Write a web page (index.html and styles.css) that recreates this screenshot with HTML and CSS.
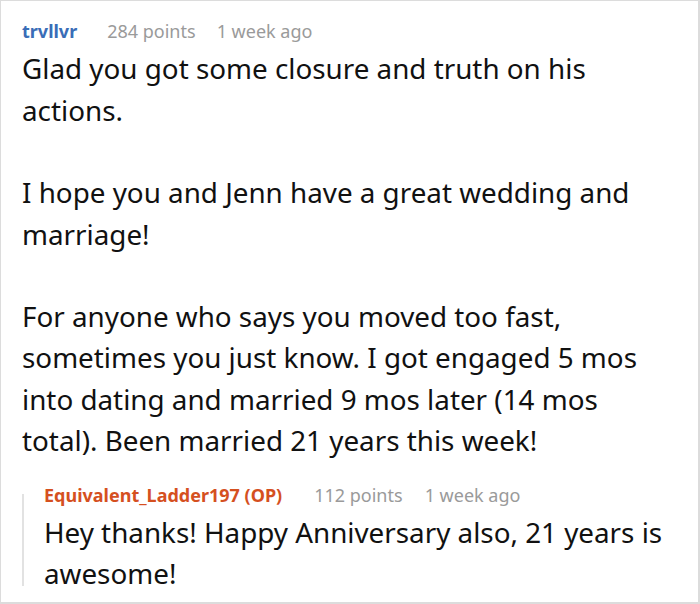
FILE: index.html
```html
<!DOCTYPE html>
<html>
<head>
<meta charset="utf-8">
<link rel="stylesheet" href="styles.css">
</head>
<body>
<div class="frame">
  <div class="comment">
    <div class="meta">
      <span class="user">trvllvr</span>
      <span class="info">284 points</span>
      <span class="info">1 week ago</span>
    </div>
    <div class="body">
      <p>Glad you got some closure and truth on his actions.</p>
      <p>I hope you and Jenn have a great wedding and marriage!</p>
      <p>For anyone who says you moved too fast, sometimes you just know. I got engaged 5 mos into dating and married 9 mos later (14 mos total). Been married 21 years this week!</p>
    </div>
    <div class="reply">
      <div class="meta reply-meta">
        <span class="user op">Equivalent_Ladder197 (OP)</span>
        <span class="info">112 points</span>
        <span class="info">1 week ago</span>
      </div>
      <div class="body reply-body">
        <p>Hey thanks! Happy Anniversary also, 21 years is awesome!</p>
      </div>
    </div>
  </div>
</div>
</body>
</html>
```
FILE: styles.css
```css
html, body {
  margin: 0;
  padding: 0;
  background: #fff;
}
.frame {
  width: 700px;
  height: 604px;
  box-sizing: border-box;
  border: 1px solid #dcdcdc;
  border-right-width: 2px;
  border-bottom-width: 2px;
  overflow: hidden;
  font-family: "Noto Sans", "Open Sans", sans-serif;
}
.comment {
  padding: 18px 30px 0 21px;
}
.meta {
  display: flex;
  white-space: nowrap;
  font-size: 18px;
  line-height: 24px;
  color: #9a9a9a;
}
.user {
  font-weight: 700;
  color: #3a6db7;
  margin-right: 30px;
}
.info {
  margin-right: 21px;
}
.body {
  margin-top: 5.35px;
  font-size: 27.8px;
  line-height: 41.3px;
  color: #111;
}
.body p {
  margin: 0 0 41.3px 0;
}
.body p:last-child {
  margin-bottom: 0;
}
.reply {
  position: relative;
  margin-top: 21.4px;
  margin-right: -6px;
  padding-left: 22px;
}
.reply::before {
  content: "";
  position: absolute;
  left: 0;
  top: 11px;
  bottom: 8.6px;
  width: 2px;
  background: #e2e2e2;
}
.reply-meta {
  font-stretch: 87.5%;
}
.reply-meta .user {
  color: #d5501f;
  font-stretch: 93%;
  margin-right: 32px;
}
.reply-meta .info {
  margin-right: 22px;
}
.reply-body {
  font-stretch: 84.6%;
}
```
